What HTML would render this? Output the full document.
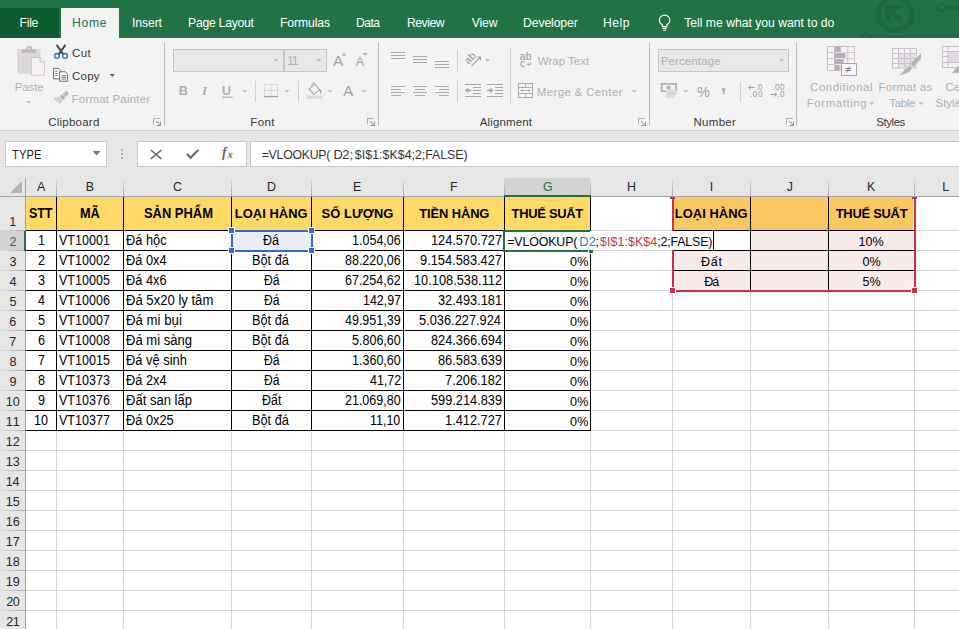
<!DOCTYPE html>
<html lang="vi"><head><meta charset="utf-8"><title>Excel VLOOKUP</title>
<style>
html,body{margin:0;padding:0}
body{width:959px;height:629px;overflow:hidden;position:relative;background:#fff;font-family:"Liberation Sans", sans-serif;}
body div, body span.t, body svg{position:absolute;box-sizing:border-box}
span.t{white-space:pre;display:block}
</style></head><body>
<div style="left:0px;top:0px;width:959px;height:38px;background:#217346;"></div>
<svg style="left:760px;top:0;width:199px;height:38px" viewBox="760 0 199 38" fill="none" stroke="#1e6840">
<circle cx="894.9" cy="13.8" r="16.7" stroke-width="5.2"/>
<path d="M887.6 21 V7.2 H902 M888.5 8 L901.4 20.6" stroke-width="4.8"/>
<circle cx="941.2" cy="7.5" r="3.8" stroke-width="2.6"/><path d="M945 7.7 H959" stroke-width="4.2"/>
<path d="M869 36.4 H959" stroke-width="2"/><circle cx="865.5" cy="37.3" r="3.4" stroke-width="2.2"/>
</svg>
<div style="left:0px;top:8px;width:59px;height:30px;background:#0e5c2f;"></div>
<div style="left:61px;top:8px;width:58px;height:30px;background:#f3f3f3;"></div>
<span class="t" style="left:19.50px;top:17.00px;font-size:12.2px;line-height:12.2px;color:#fff;letter-spacing:-0.250px;">File</span>
<span class="t" style="left:72.00px;top:17.00px;font-size:12.2px;line-height:12.2px;color:#217346;letter-spacing:0.667px;">Home</span>
<span class="t" style="left:132.00px;top:17.00px;font-size:12.2px;line-height:12.2px;color:#fff;letter-spacing:-0.100px;">Insert</span>
<span class="t" style="left:188.00px;top:17.00px;font-size:12.2px;line-height:12.2px;color:#fff;letter-spacing:-0.250px;">Page Layout</span>
<span class="t" style="left:280.00px;top:17.00px;font-size:12.2px;line-height:12.2px;color:#fff;letter-spacing:-0.107px;">Formulas</span>
<span class="t" style="left:356.00px;top:17.00px;font-size:12.2px;line-height:12.2px;color:#fff;letter-spacing:-0.583px;">Data</span>
<span class="t" style="left:407.00px;top:17.00px;font-size:12.2px;line-height:12.2px;color:#fff;letter-spacing:-0.500px;">Review</span>
<span class="t" style="left:471.75px;top:17.00px;font-size:12.2px;line-height:12.2px;color:#fff;letter-spacing:-0.167px;">View</span>
<span class="t" style="left:523.00px;top:17.00px;font-size:12.2px;line-height:12.2px;color:#fff;letter-spacing:-0.094px;">Developer</span>
<span class="t" style="left:603.00px;top:17.00px;font-size:12.2px;line-height:12.2px;color:#fff;letter-spacing:0.500px;">Help</span>
<span class="t" style="left:684.25px;top:17.00px;font-size:12.2px;line-height:12.2px;color:#fff;letter-spacing:-0.010px;">Tell me what you want to do</span>
<svg style="left:656px;top:12px;width:18px;height:22px" viewBox="656 12 18 22" fill="none" stroke="#fff" stroke-width="1.15">
<path d="M662.4 26.6 V25 C660.6 23.6 659.3 22.3 659.3 20.4 A5.3 5.3 0 0 1 669.9 20.4 C669.9 22.3 668.6 23.6 666.8 25 V26.6 Z"/>
<path d="M662.4 28.4 H666.8 M663 30.2 H666.2"/>
</svg>
<div style="left:0px;top:38px;width:959px;height:92px;background:#f3f3f3;"></div>
<div style="left:0px;top:130px;width:959px;height:1px;background:#d4d4d4;"></div>
<div style="left:164px;top:42px;width:1px;height:84px;background:#bdbdbd;"></div>
<div style="left:378px;top:42px;width:1px;height:84px;background:#bdbdbd;"></div>
<div style="left:649px;top:42px;width:1px;height:84px;background:#bdbdbd;"></div>
<div style="left:796px;top:42px;width:1px;height:84px;background:#bdbdbd;"></div>
<svg style="left:0;top:38px;width:959px;height:92px" viewBox="0 38 959 92"><rect x="17" y="49" width="23.7" height="24.8" rx="1.5" fill="#dbd7db"/><rect x="22" y="49.3" width="13.8" height="3.4" fill="#b9b5b9"/><path d="M26.4 49.4 V47.3 Q26.4 46.3 27.4 46.3 H30.8 Q31.8 46.3 31.8 47.3 V49.4 Z" fill="#b9b5b9"/><circle cx="29.1" cy="48.2" r="0.9" fill="#f3f3f3"/><path d="M31.3 57.5 H40 L44.4 62 V75.3 H31.3 Z" fill="#f6f2f6" stroke="#c6c2c6" stroke-width="0.9"/><path d="M40 57.5 V62 H44.4" fill="none" stroke="#c6c2c6" stroke-width="0.9"/><path d="M26.0 101.1 H31.2 L28.6 103.9 Z" fill="#c0c0c0"/><path d="M56.6 44.8 L63.3 54.3 M65.4 44.8 L58.7 54.3" stroke="#4a4a4a" stroke-width="2" fill="none"/><circle cx="57" cy="55.9" r="2.4" fill="none" stroke="#2e75b6" stroke-width="1.3"/><circle cx="65" cy="55.9" r="2.4" fill="none" stroke="#2e75b6" stroke-width="1.3"/><path d="M59.5 78.8 H53.6 V68.4 H58.5 L60.6 70.5 V71.5" fill="#fff" stroke="#5a5a5a" stroke-width="0.9"/><path d="M59.6 71.8 H65.2 L67.6 74.2 V81.2 H59.6 Z" fill="#fff" stroke="#5a5a5a" stroke-width="0.9"/><path d="M55.1 71.2 H57.7 M55.1 73.4 H57.7 M55.1 75.6 H57.7 M61.5 75.7 H65.9 M61.5 77.4 H65.9 M61.5 79.1 H65.9" stroke="#2e75b6" stroke-width="0.9"/><path d="M109.7 74.1 H114.9 L112.3 76.9 Z" fill="#606060"/><path d="M66.3 90.8 L69.3 93.4 L65.2 97.2 L62.4 94.3 Z" fill="#bdb9bd"/><path d="M61.6 94.4 L65.1 98.1 L63.5 99.7 L60 96.1 Z" fill="#a9a5a9"/><path d="M59.4 96.3 L63.2 100.2 L59.8 104.3 L53.6 98.6 Z" fill="#d2ced2"/><path d="M153.5 124.5 V118.5 H160" fill="none" stroke="#adadad" stroke-width="1"/><path d="M156.2 121.2 L160 125 M156.5 125.5 H160.5 V121.5" fill="none" stroke="#9a9a9a" stroke-width="1.05"/><rect x="173.5" y="49.5" width="110" height="22" fill="#e8e8e8" stroke="#c6c6c6"/><rect x="284.5" y="49.5" width="42" height="22" fill="#e8e8e8" stroke="#c6c6c6"/><path d="M273.4 58.9 H278.6 L276.0 61.7 Z" fill="#c0c0c0"/><path d="M316.4 58.9 H321.6 L319.0 61.7 Z" fill="#c0c0c0"/><path d="M341.5 55.5 L344 52.8 L346.5 55.5 Z" fill="#b0b0b0"/><path d="M362.5 53 H367.5 L365 55.8 Z" fill="#b0b0b0"/><path d="M222 97.2 H232.6" stroke="#a9a9a9" stroke-width="1.2"/><path d="M241.9 89.9 H247.1 L244.5 92.7 Z" fill="#c0c0c0"/><path d="M264.5 84.5 H277.5 M264.5 90.5 H277.5 M264.5 84.5 V96 M271 84.5 V96 M277.5 84.5 V96" stroke="#c9b9cc" stroke-width="1" stroke-dasharray="1 1" fill="none"/><path d="M263.8 96.6 H278" stroke="#a0a0a0" stroke-width="1.3"/><path d="M284.4 89.9 H289.6 L287.0 92.7 Z" fill="#c0c0c0"/><path d="M309.3 89.2 L314.6 84.2 L319.6 89.6 L313.9 94.3 Z" fill="#f3f3f3" stroke="#a4a4a4" stroke-width="1.1"/><path d="M312 86.5 V83.5 Q313.5 82 315 83.5 V85" fill="none" stroke="#a4a4a4" stroke-width="1"/><path d="M319.5 88.5 Q322.3 91 321.3 94.3 Q319.4 92.5 319.5 88.5 Z" fill="#a4a4a4"/><rect x="306" y="95.5" width="16" height="3.4" fill="#e2d8e2"/><path d="M327.4 89.9 H332.6 L330.0 92.7 Z" fill="#c0c0c0"/><path d="M361.4 89.9 H366.6 L364.0 92.7 Z" fill="#c0c0c0"/><path d="M367.5 124.5 V118.5 H374" fill="none" stroke="#adadad" stroke-width="1"/><path d="M370.2 121.2 L374 125 M370.5 125.5 H374.5 V121.5" fill="none" stroke="#9a9a9a" stroke-width="1.05"/><path d="M391.0 52.5 h14.0 M391.0 55.5 h14.0 M391.0 58.5 h14.0" stroke="#a8a8a8" stroke-width="1" fill="none"/><path d="M413.0 56.5 h14.0 M413.0 59.5 h14.0 M413.0 62.5 h14.0" stroke="#a8a8a8" stroke-width="1" fill="none"/><path d="M435.0 61.5 h14.0 M435.0 64.5 h14.0 M435.0 67.5 h14.0" stroke="#a8a8a8" stroke-width="1" fill="none"/><path d="M471.4 66.2 L480 57.6 M477.4 57.2 H480.4 V60.2" fill="none" stroke="#a4a4a4" stroke-width="1.2"/><path d="M484.9 58.9 H490.1 L487.5 61.7 Z" fill="#c0c0c0"/><path d="M530.8 62.2 V64.4 H527.2 M528.8 62.8 L527.2 64.4 L528.8 66" fill="none" stroke="#a8a8a8" stroke-width="1"/><path d="M391.0 86.5 h14.0 M391.0 89.5 h10.0 M391.0 92.5 h14.0 M391.0 95.5 h10.0" stroke="#a8a8a8" stroke-width="1" fill="none"/><path d="M413.0 86.5 h14.0 M415.0 89.5 h10.0 M413.0 92.5 h14.0 M415.0 95.5 h10.0" stroke="#a8a8a8" stroke-width="1" fill="none"/><path d="M435.0 86.5 h14.0 M439.0 89.5 h10.0 M435.0 92.5 h14.0 M439.0 95.5 h10.0" stroke="#a8a8a8" stroke-width="1" fill="none"/><path d="M465.0 84.5 h16.0 M473.0 87.5 h8.0 M473.0 90.5 h8.0 M473.0 93.5 h8.0 M465.0 96.5 h16.0" stroke="#a8a8a8" stroke-width="1" fill="none"/><path d="M471.4 90.5 H467" fill="none" stroke="#a6a6a6" stroke-width="1.6"/><path d="M465 90.5 L468.4 87.6 V93.4 Z" fill="#a6a6a6"/><path d="M487.0 84.5 h16.0 M495.0 87.5 h8.0 M495.0 90.5 h8.0 M495.0 93.5 h8.0 M487.0 96.5 h16.0" stroke="#a8a8a8" stroke-width="1" fill="none"/><path d="M487.2 90.5 H491.6" fill="none" stroke="#a6a6a6" stroke-width="1.6"/><path d="M493.6 90.5 L490.2 87.6 V93.4 Z" fill="#a6a6a6"/><rect x="518.5" y="83.5" width="14" height="14" fill="#f8f4f8" stroke="#b0a8b0"/><path d="M518.5 87.5 H532.5 M518.5 93.5 H532.5 M525.5 83.5 V87.5 M525.5 93.5 V97.5" stroke="#b0a8b0" fill="none"/><path d="M521 90.5 H530 M522.5 89 L521 90.5 L522.5 92 M528.5 89 L530 90.5 L528.5 92" stroke="#b0a8b0" fill="none" stroke-width="0.9"/><path d="M631.7 89.9 H636.9 L634.3 92.7 Z" fill="#c0c0c0"/><path d="M638.5 124.5 V118.5 H645" fill="none" stroke="#adadad" stroke-width="1"/><path d="M641.2 121.2 L645 125 M641.5 125.5 H645.5 V121.5" fill="none" stroke="#9a9a9a" stroke-width="1.05"/><rect x="658.5" y="49.5" width="130" height="22" fill="#e8e8e8" stroke="#c6c6c6"/><path d="M778.9 58.9 H784.1 L781.5 61.7 Z" fill="#c0c0c0"/><rect x="661.6" y="83.9" width="14.6" height="7.4" fill="#f3f3f3" stroke="#a6a6a6" stroke-width="1.5"/><circle cx="668.6" cy="87.6" r="2" fill="#b0b0b0"/><ellipse cx="671.2" cy="91" rx="5.6" ry="1.9" fill="#e4dce4"/><ellipse cx="671.2" cy="93.6" rx="5.6" ry="1.9" fill="#d9d1d9"/><ellipse cx="670" cy="96.4" rx="5" ry="1.9" fill="#e4dce4"/><path d="M683.1 89.9 H688.3 L685.7 92.7 Z" fill="#c0c0c0"/><path d="M754.6 87.5 H748.6 M750.8 85.3 L748.6 87.5 L750.8 89.7" fill="none" stroke="#a0a0a0" stroke-width="1"/><path d="M770.4 94.5 H776.6 M774.4 92.3 L776.6 94.5 L774.4 96.7" fill="none" stroke="#a0a0a0" stroke-width="1"/><path d="M786.5 124.5 V118.5 H793" fill="none" stroke="#adadad" stroke-width="1"/><path d="M789.2 121.2 L793 125 M789.5 125.5 H793.5 V121.5" fill="none" stroke="#9a9a9a" stroke-width="1.05"/><rect x="827.5" y="46.5" width="27" height="24" fill="#f8f2f8" stroke="#c9c1c9"/><path d="M827.5 52.5 H854.5 M827.5 58.5 H854.5 M827.5 64.5 H854.5 M834.5 46.5 V70.5 M840.8 46.5 V70.5 M847.8 46.5 V70.5" stroke="#c9c1c9" fill="none"/><path d="M834.6 46.6 h6 v6 h-6z M834.6 52.6 h11 v6 h-11z M834.6 58.6 h9 v6 h-9z M834.6 64.6 h5 v5.8 h-5z" fill="#b3afb3"/><path d="M834.6 52.5 H846 M834.6 58.5 H846 M834.6 64.5 H844" stroke="#ece6ec" fill="none"/><rect x="841.5" y="63.5" width="15" height="12" fill="#f8f2f8" stroke="#a9a5a9"/><path d="M869.4 102.3 H874.0 L871.7 104.9 Z" fill="#b8b8b8"/><rect x="892.5" y="48.5" width="24" height="19.5" fill="#f8f2f8" stroke="#c9c1c9"/><rect x="899" y="53.5" width="17.5" height="14.5" fill="#e3dfe3"/><path d="M892.5 53.5 H916.5 M892.5 58.5 H916.5 M892.5 63.5 H916.5 M898.5 48.5 V68 M904.5 48.5 V68 M910.5 48.5 V68" stroke="#c9c1c9" fill="none"/><path d="M921 53.6 V58.8 L913.6 67 L910.4 63.8 Z" fill="#b7b3b7"/><path d="M909.6 64.8 L912.6 67.8 Q910 75 898.6 75.4 Q904.5 71 904.8 67.6 Q906.5 64.6 909.6 64.8 Z" fill="#b7b3b7" stroke="#f3f3f3" stroke-width="0.8"/><path d="M905.6 69 Q906.8 66.6 909 66.4" stroke="#f3f3f3" stroke-width="1" fill="none"/><path d="M918.7 102.3 H923.3 L921.0 104.9 Z" fill="#b8b8b8"/><rect x="942.5" y="46.5" width="24" height="21" fill="#f8f2f8" stroke="#c9c1c9"/><rect x="948" y="51.5" width="18" height="11" fill="#e0dce0"/><path d="M942.5 51.5 H966 M942.5 56.5 H948 M942.5 62.5 H966 M948 46.5 V67.5" stroke="#c9c1c9" fill="none"/><path d="M949 73.4 Q953.5 72.5 955 68.5 Q956.5 66 959.5 65.6 V73.4 Z" fill="#b7b3b7" stroke="#f3f3f3" stroke-width="0.8"/></svg>
<span class="t" style="left:14.70px;top:82.00px;font-size:11.5px;line-height:11.5px;color:#b0b0b0;letter-spacing:-0.100px;">Paste</span>
<span class="t" style="left:72.00px;top:48.00px;font-size:11.5px;line-height:11.5px;color:#383838;letter-spacing:0.425px;">Cut</span>
<span class="t" style="left:72.00px;top:71.00px;font-size:11.5px;line-height:11.5px;color:#383838;letter-spacing:0.217px;">Copy</span>
<span class="t" style="left:71.60px;top:94.00px;font-size:11.5px;line-height:11.5px;color:#b0b0b0;letter-spacing:0.185px;">Format Painter</span>
<span class="t" style="left:48.20px;top:117.00px;font-size:11.5px;line-height:11.5px;color:#383838;letter-spacing:0.237px;">Clipboard</span>
<span class="t" style="left:287.00px;top:55.00px;font-size:12.2px;line-height:12.2px;color:#b4b4b4;letter-spacing:-1.000px;">11</span>
<span class="t" style="left:333.00px;top:53.00px;font-size:15.5px;line-height:15.5px;color:#a2a2a2;letter-spacing:0.250px;">A</span>
<span class="t" style="left:355.80px;top:56.00px;font-size:12.5px;line-height:12.5px;color:#a2a2a2;letter-spacing:-0.050px;">A</span>
<span class="t" style="left:178.75px;top:85.00px;font-size:12.6px;line-height:12.6px;color:#b0b0b0;font-weight:700;letter-spacing:-0.250px;">B</span>
<span class="t" style="left:201.90px;top:84.00px;font-size:13px;line-height:13px;color:#b0b0b0;font-weight:700;font-style:italic;font-family:'Liberation Serif',serif;">I</span>
<span class="t" style="left:222.05px;top:85.00px;font-size:12.4px;line-height:12.4px;color:#b0b0b0;font-weight:700;letter-spacing:1.500px;">U</span>
<div style="left:255px;top:81px;width:1px;height:21px;background:#d0d0d0;"></div>
<div style="left:298px;top:81px;width:1px;height:21px;background:#d0d0d0;"></div>
<span class="t" style="left:343.30px;top:83.00px;font-size:15px;line-height:15px;color:#a0a0a0;letter-spacing:-0.500px;">A</span>
<span class="t" style="left:250.20px;top:117.00px;font-size:11.5px;line-height:11.5px;color:#383838;letter-spacing:0.433px;">Font</span>
<div style="left:457px;top:50px;width:1px;height:21px;background:#d0d0d0;"></div>
<span class="t" style="left:469.50px;top:56.00px;font-size:10.4px;line-height:10.4px;color:#929292;transform:rotate(-45deg);transform-origin:0 100%;">ab</span>
<div style="left:510px;top:48px;width:1px;height:55px;background:#d0d0d0;"></div>
<span class="t" style="left:519.70px;top:52.00px;font-size:10.2px;line-height:10.2px;color:#969696;letter-spacing:0.500px;">ab</span>
<span class="t" style="left:520.10px;top:59.00px;font-size:10.2px;line-height:10.2px;color:#969696;">c</span>
<span class="t" style="left:537.80px;top:56.00px;font-size:11.5px;line-height:11.5px;color:#b0b0b0;letter-spacing:-0.006px;">Wrap Text</span>
<div style="left:457px;top:81px;width:1px;height:21px;background:#d0d0d0;"></div>
<span class="t" style="left:536.80px;top:87.00px;font-size:11.5px;line-height:11.5px;color:#b0b0b0;letter-spacing:0.346px;">Merge &amp; Center</span>
<span class="t" style="left:479.70px;top:117.00px;font-size:11.5px;line-height:11.5px;color:#383838;letter-spacing:0.137px;">Alignment</span>
<span class="t" style="left:660.80px;top:56.00px;font-size:11.5px;line-height:11.5px;color:#b0b0b0;letter-spacing:0.106px;">Percentage</span>
<span class="t" style="left:697.00px;top:85.00px;font-size:14.5px;line-height:14.5px;color:#a0a0a0;letter-spacing:0.500px;">%</span>
<span class="t" style="left:720.40px;top:73.00px;font-size:21px;line-height:21px;color:#b0b0b0;font-weight:700;">,</span>
<div style="left:740px;top:82px;width:1px;height:20px;background:#d0d0d0;"></div>
<span class="t" style="left:756.45px;top:84.00px;font-size:8.2px;line-height:8.2px;color:#9c9c9c;letter-spacing:-0.650px;">.0</span>
<span class="t" style="left:749.85px;top:91.00px;font-size:8.2px;line-height:8.2px;color:#9c9c9c;letter-spacing:0.725px;">.00</span>
<span class="t" style="left:772.25px;top:84.00px;font-size:8.2px;line-height:8.2px;color:#9c9c9c;letter-spacing:0.475px;">.00</span>
<span class="t" style="left:777.35px;top:91.00px;font-size:8.2px;line-height:8.2px;color:#9c9c9c;letter-spacing:0.350px;">.0</span>
<span class="t" style="left:693.50px;top:117.00px;font-size:11.5px;line-height:11.5px;color:#383838;letter-spacing:0.290px;">Number</span>
<span class="t" style="left:845.55px;top:64.00px;font-size:10.5px;line-height:10.5px;color:#666;">≠</span>
<span class="t" style="left:810.10px;top:82.00px;font-size:11.5px;line-height:11.5px;color:#b0b0b0;letter-spacing:0.495px;">Conditional</span>
<span class="t" style="left:806.80px;top:98.00px;font-size:11.5px;line-height:11.5px;color:#b0b0b0;letter-spacing:0.550px;">Formatting</span>
<span class="t" style="left:878.50px;top:82.00px;font-size:11.5px;line-height:11.5px;color:#b0b0b0;letter-spacing:0.244px;">Format as</span>
<span class="t" style="left:889.25px;top:98.00px;font-size:11.5px;line-height:11.5px;color:#b0b0b0;letter-spacing:-0.312px;">Table</span>
<span class="t" style="left:945.50px;top:82.00px;font-size:11.5px;line-height:11.5px;color:#b0b0b0;">Cell</span>
<span class="t" style="left:935.50px;top:98.00px;font-size:11.5px;line-height:11.5px;color:#b0b0b0;">Styles</span>
<span class="t" style="left:876.30px;top:117.00px;font-size:11.5px;line-height:11.5px;color:#383838;letter-spacing:-0.460px;">Styles</span>
<div style="left:0px;top:131px;width:959px;height:47px;background:#e6e6e6;"></div>
<div style="left:5px;top:141px;width:102px;height:26px;background:#fff;border:1px solid #c8c8c8;"></div>
<span class="t" style="left:11.98px;top:149.00px;font-size:12.6px;line-height:12.6px;color:#222;transform:scaleX(0.8937);transform-origin:0 0;">TYPE</span>
<svg style="left:92px;top:151px;width:9px;height:5px" viewBox="0 0 9 5"><path d="M0.5 0 H8.5 L4.5 4.5 Z" fill="#777"/></svg>
<div style="left:121px;top:149px;width:2px;height:2px;background:#b5b5b5;"></div>
<div style="left:121px;top:153px;width:2px;height:2px;background:#b5b5b5;"></div>
<div style="left:121px;top:157px;width:2px;height:2px;background:#b5b5b5;"></div>
<div style="left:137px;top:141px;width:110px;height:26px;background:#fff;border:1px solid #c8c8c8;"></div>
<div style="left:250px;top:141px;width:720px;height:26px;background:#fff;border:1px solid #c8c8c8;"></div>
<svg style="left:148px;top:147px;width:16px;height:14px" viewBox="148 147 16 14" fill="none" stroke="#666" stroke-width="1.6"><path d="M150.8 150 L161.4 158.8 M161.4 150 L150.8 158.8"/></svg>
<svg style="left:184px;top:147px;width:17px;height:14px" viewBox="184 147 17 14"><path d="M186 154.6 L187.8 153.2 L190.6 156.2 L197.6 149.2 L199 150.4 L190.6 159.4 Z" fill="#6a6a6a"/></svg>
<span class="t" style="left:222.00px;top:146.00px;font-size:13.6px;line-height:13.6px;color:#666;font-weight:700;font-style:italic;font-family:'Liberation Serif',serif;">f</span>
<span class="t" style="left:227.80px;top:150.00px;font-size:10px;line-height:10px;color:#666;font-weight:700;font-style:italic;font-family:'Liberation Serif',serif;">x</span>
<span class="t" style="left:261.70px;top:149.00px;font-size:12.3px;line-height:12.3px;color:#333;letter-spacing:-0.250px;">=VLOOKUP(</span>
<span class="t" style="left:333.60px;top:149.00px;font-size:12.8px;line-height:12.8px;color:#333;letter-spacing:-0.550px;">D2</span>
<span class="t" style="left:349.75px;top:149.00px;font-size:12.3px;line-height:12.3px;color:#333;">;</span>
<span class="t" style="left:354.75px;top:149.00px;font-size:12.3px;line-height:12.3px;color:#333;letter-spacing:0.100px;">$I$1:$K$4</span>
<span class="t" style="left:411.55px;top:149.00px;font-size:12.3px;line-height:12.3px;color:#333;">;2;FALSE)</span>
<div style="left:0px;top:178px;width:959px;height:451px;background:#fff;"></div>
<div style="left:0px;top:178px;width:959px;height:18px;background:#e6e6e6;"></div>
<div style="left:0px;top:178px;width:25px;height:451px;background:#e6e6e6;"></div>
<div style="left:56px;top:197px;width:1px;height:432px;background:#d4d4d4;"></div>
<div style="left:123px;top:197px;width:1px;height:432px;background:#d4d4d4;"></div>
<div style="left:231px;top:197px;width:1px;height:432px;background:#d4d4d4;"></div>
<div style="left:311px;top:197px;width:1px;height:432px;background:#d4d4d4;"></div>
<div style="left:403px;top:197px;width:1px;height:432px;background:#d4d4d4;"></div>
<div style="left:504px;top:197px;width:1px;height:432px;background:#d4d4d4;"></div>
<div style="left:590px;top:197px;width:1px;height:432px;background:#d4d4d4;"></div>
<div style="left:672px;top:197px;width:1px;height:432px;background:#d4d4d4;"></div>
<div style="left:750px;top:197px;width:1px;height:432px;background:#d4d4d4;"></div>
<div style="left:828px;top:197px;width:1px;height:432px;background:#d4d4d4;"></div>
<div style="left:914px;top:197px;width:1px;height:432px;background:#d4d4d4;"></div>
<div style="left:977px;top:197px;width:1px;height:432px;background:#d4d4d4;"></div>
<div style="left:26px;top:230px;width:933px;height:1px;background:#d4d4d4;"></div>
<div style="left:26px;top:250px;width:933px;height:1px;background:#d4d4d4;"></div>
<div style="left:26px;top:270px;width:933px;height:1px;background:#d4d4d4;"></div>
<div style="left:26px;top:290px;width:933px;height:1px;background:#d4d4d4;"></div>
<div style="left:26px;top:310px;width:933px;height:1px;background:#d4d4d4;"></div>
<div style="left:26px;top:330px;width:933px;height:1px;background:#d4d4d4;"></div>
<div style="left:26px;top:350px;width:933px;height:1px;background:#d4d4d4;"></div>
<div style="left:26px;top:370px;width:933px;height:1px;background:#d4d4d4;"></div>
<div style="left:26px;top:390px;width:933px;height:1px;background:#d4d4d4;"></div>
<div style="left:26px;top:410px;width:933px;height:1px;background:#d4d4d4;"></div>
<div style="left:26px;top:430px;width:933px;height:1px;background:#d4d4d4;"></div>
<div style="left:26px;top:450px;width:933px;height:1px;background:#d4d4d4;"></div>
<div style="left:26px;top:470px;width:933px;height:1px;background:#d4d4d4;"></div>
<div style="left:26px;top:490px;width:933px;height:1px;background:#d4d4d4;"></div>
<div style="left:26px;top:510px;width:933px;height:1px;background:#d4d4d4;"></div>
<div style="left:26px;top:530px;width:933px;height:1px;background:#d4d4d4;"></div>
<div style="left:26px;top:550px;width:933px;height:1px;background:#d4d4d4;"></div>
<div style="left:26px;top:570px;width:933px;height:1px;background:#d4d4d4;"></div>
<div style="left:26px;top:590px;width:933px;height:1px;background:#d4d4d4;"></div>
<div style="left:26px;top:610px;width:933px;height:1px;background:#d4d4d4;"></div>
<div style="left:26px;top:630px;width:933px;height:1px;background:#d4d4d4;"></div>
<div style="left:0px;top:196px;width:959px;height:1px;background:#a3a3a3;"></div>
<div style="left:25px;top:178px;width:1px;height:451px;background:#a3a3a3;"></div>
<div style="left:56px;top:178px;width:1px;height:18px;background:linear-gradient(to bottom,#e0e0e0,#a6a6a6);"></div>
<div style="left:123px;top:178px;width:1px;height:18px;background:linear-gradient(to bottom,#e0e0e0,#a6a6a6);"></div>
<div style="left:231px;top:178px;width:1px;height:18px;background:linear-gradient(to bottom,#e0e0e0,#a6a6a6);"></div>
<div style="left:311px;top:178px;width:1px;height:18px;background:linear-gradient(to bottom,#e0e0e0,#a6a6a6);"></div>
<div style="left:403px;top:178px;width:1px;height:18px;background:linear-gradient(to bottom,#e0e0e0,#a6a6a6);"></div>
<div style="left:504px;top:178px;width:1px;height:18px;background:linear-gradient(to bottom,#e0e0e0,#a6a6a6);"></div>
<div style="left:590px;top:178px;width:1px;height:18px;background:linear-gradient(to bottom,#e0e0e0,#a6a6a6);"></div>
<div style="left:672px;top:178px;width:1px;height:18px;background:linear-gradient(to bottom,#e0e0e0,#a6a6a6);"></div>
<div style="left:750px;top:178px;width:1px;height:18px;background:linear-gradient(to bottom,#e0e0e0,#a6a6a6);"></div>
<div style="left:828px;top:178px;width:1px;height:18px;background:linear-gradient(to bottom,#e0e0e0,#a6a6a6);"></div>
<div style="left:914px;top:178px;width:1px;height:18px;background:linear-gradient(to bottom,#e0e0e0,#a6a6a6);"></div>
<div style="left:977px;top:178px;width:1px;height:18px;background:linear-gradient(to bottom,#e0e0e0,#a6a6a6);"></div>
<div style="left:0px;top:230px;width:25px;height:1px;background:linear-gradient(to right,#dedede,#ababab);"></div>
<div style="left:0px;top:250px;width:25px;height:1px;background:linear-gradient(to right,#dedede,#ababab);"></div>
<div style="left:0px;top:270px;width:25px;height:1px;background:linear-gradient(to right,#dedede,#ababab);"></div>
<div style="left:0px;top:290px;width:25px;height:1px;background:linear-gradient(to right,#dedede,#ababab);"></div>
<div style="left:0px;top:310px;width:25px;height:1px;background:linear-gradient(to right,#dedede,#ababab);"></div>
<div style="left:0px;top:330px;width:25px;height:1px;background:linear-gradient(to right,#dedede,#ababab);"></div>
<div style="left:0px;top:350px;width:25px;height:1px;background:linear-gradient(to right,#dedede,#ababab);"></div>
<div style="left:0px;top:370px;width:25px;height:1px;background:linear-gradient(to right,#dedede,#ababab);"></div>
<div style="left:0px;top:390px;width:25px;height:1px;background:linear-gradient(to right,#dedede,#ababab);"></div>
<div style="left:0px;top:410px;width:25px;height:1px;background:linear-gradient(to right,#dedede,#ababab);"></div>
<div style="left:0px;top:430px;width:25px;height:1px;background:linear-gradient(to right,#dedede,#ababab);"></div>
<div style="left:0px;top:450px;width:25px;height:1px;background:linear-gradient(to right,#dedede,#ababab);"></div>
<div style="left:0px;top:470px;width:25px;height:1px;background:linear-gradient(to right,#dedede,#ababab);"></div>
<div style="left:0px;top:490px;width:25px;height:1px;background:linear-gradient(to right,#dedede,#ababab);"></div>
<div style="left:0px;top:510px;width:25px;height:1px;background:linear-gradient(to right,#dedede,#ababab);"></div>
<div style="left:0px;top:530px;width:25px;height:1px;background:linear-gradient(to right,#dedede,#ababab);"></div>
<div style="left:0px;top:550px;width:25px;height:1px;background:linear-gradient(to right,#dedede,#ababab);"></div>
<div style="left:0px;top:570px;width:25px;height:1px;background:linear-gradient(to right,#dedede,#ababab);"></div>
<div style="left:0px;top:590px;width:25px;height:1px;background:linear-gradient(to right,#dedede,#ababab);"></div>
<div style="left:0px;top:610px;width:25px;height:1px;background:linear-gradient(to right,#dedede,#ababab);"></div>
<div style="left:0px;top:630px;width:25px;height:1px;background:linear-gradient(to right,#dedede,#ababab);"></div>
<div style="left:505px;top:178px;width:85px;height:18px;background:#d2d2d2;"></div>
<div style="left:504px;top:195px;width:87px;height:2px;background:#217346;"></div>
<div style="left:0px;top:231px;width:25px;height:19px;background:#d2d2d2;"></div>
<div style="left:24px;top:231px;width:2px;height:20px;background:#217346;"></div>
<svg style="left:10px;top:181px;width:12px;height:12px" viewBox="0 0 12 12"><path d="M12 0 V12 H0 Z" fill="#b4b4b4"/></svg>
<span class="t" style="left:36.88px;top:181.00px;font-size:12.4px;line-height:12.4px;color:#262626;">A</span>
<span class="t" style="left:85.75px;top:181.00px;font-size:12.4px;line-height:12.4px;color:#262626;">B</span>
<span class="t" style="left:173.00px;top:181.00px;font-size:12.4px;line-height:12.4px;color:#262626;">C</span>
<span class="t" style="left:266.88px;top:181.00px;font-size:12.4px;line-height:12.4px;color:#262626;">D</span>
<span class="t" style="left:353.12px;top:181.00px;font-size:12.4px;line-height:12.4px;color:#262626;">E</span>
<span class="t" style="left:450.00px;top:181.00px;font-size:12.4px;line-height:12.4px;color:#262626;">F</span>
<span class="t" style="left:542.88px;top:181.00px;font-size:12.4px;line-height:12.4px;color:#217346;">G</span>
<span class="t" style="left:627.00px;top:181.00px;font-size:12.4px;line-height:12.4px;color:#262626;">H</span>
<span class="t" style="left:709.75px;top:181.00px;font-size:12.4px;line-height:12.4px;color:#262626;">I</span>
<span class="t" style="left:786.75px;top:181.00px;font-size:12.4px;line-height:12.4px;color:#262626;">J</span>
<span class="t" style="left:867.00px;top:181.00px;font-size:12.4px;line-height:12.4px;color:#262626;">K</span>
<span class="t" style="left:942.25px;top:181.00px;font-size:12.4px;line-height:12.4px;color:#262626;">L</span>
<span class="t" style="left:9.15px;top:216.00px;font-size:12.6px;line-height:12.6px;color:#262626;">1</span>
<span class="t" style="left:9.40px;top:236.00px;font-size:12.6px;line-height:12.6px;color:#217346;">2</span>
<span class="t" style="left:9.40px;top:256.00px;font-size:12.6px;line-height:12.6px;color:#262626;">3</span>
<span class="t" style="left:9.40px;top:276.00px;font-size:12.6px;line-height:12.6px;color:#262626;">4</span>
<span class="t" style="left:9.40px;top:296.00px;font-size:12.6px;line-height:12.6px;color:#262626;">5</span>
<span class="t" style="left:9.28px;top:316.00px;font-size:12.6px;line-height:12.6px;color:#262626;">6</span>
<span class="t" style="left:9.28px;top:336.00px;font-size:12.6px;line-height:12.6px;color:#262626;">7</span>
<span class="t" style="left:9.40px;top:356.00px;font-size:12.6px;line-height:12.6px;color:#262626;">8</span>
<span class="t" style="left:9.40px;top:376.00px;font-size:12.6px;line-height:12.6px;color:#262626;">9</span>
<span class="t" style="left:5.70px;top:396.00px;font-size:12.6px;line-height:12.6px;color:#262626;letter-spacing:0.100px;">10</span>
<span class="t" style="left:5.70px;top:416.00px;font-size:12.6px;line-height:12.6px;color:#262626;letter-spacing:1.100px;">11</span>
<span class="t" style="left:5.70px;top:436.00px;font-size:12.6px;line-height:12.6px;color:#262626;letter-spacing:0.100px;">12</span>
<span class="t" style="left:5.70px;top:456.00px;font-size:12.6px;line-height:12.6px;color:#262626;letter-spacing:0.100px;">13</span>
<span class="t" style="left:5.70px;top:476.00px;font-size:12.6px;line-height:12.6px;color:#262626;letter-spacing:-0.150px;">14</span>
<span class="t" style="left:5.70px;top:496.00px;font-size:12.6px;line-height:12.6px;color:#262626;letter-spacing:0.100px;">15</span>
<span class="t" style="left:5.70px;top:516.00px;font-size:12.6px;line-height:12.6px;color:#262626;letter-spacing:0.100px;">16</span>
<span class="t" style="left:5.70px;top:536.00px;font-size:12.6px;line-height:12.6px;color:#262626;letter-spacing:0.100px;">17</span>
<span class="t" style="left:5.70px;top:556.00px;font-size:12.6px;line-height:12.6px;color:#262626;letter-spacing:0.100px;">18</span>
<span class="t" style="left:5.70px;top:576.00px;font-size:12.6px;line-height:12.6px;color:#262626;letter-spacing:0.100px;">19</span>
<span class="t" style="left:6.20px;top:596.00px;font-size:12.6px;line-height:12.6px;color:#262626;letter-spacing:-0.400px;">20</span>
<span class="t" style="left:6.20px;top:616.00px;font-size:12.6px;line-height:12.6px;color:#262626;letter-spacing:-0.400px;">21</span>
<div style="left:26px;top:197px;width:564px;height:33px;background:#ffd966;"></div>
<div style="left:673px;top:197px;width:240px;height:33px;background:#f8c762;"></div>
<div style="left:673px;top:231px;width:240px;height:59px;background:#faebeb;"></div>
<div style="left:56px;top:197px;width:1px;height:234px;background:#000;"></div>
<div style="left:123px;top:197px;width:1px;height:234px;background:#000;"></div>
<div style="left:231px;top:197px;width:1px;height:234px;background:#000;"></div>
<div style="left:311px;top:197px;width:1px;height:234px;background:#000;"></div>
<div style="left:403px;top:197px;width:1px;height:234px;background:#000;"></div>
<div style="left:504px;top:197px;width:1px;height:234px;background:#000;"></div>
<div style="left:590px;top:197px;width:1px;height:234px;background:#000;"></div>
<div style="left:26px;top:230px;width:565px;height:1px;background:#000;"></div>
<div style="left:26px;top:250px;width:565px;height:1px;background:#000;"></div>
<div style="left:26px;top:270px;width:565px;height:1px;background:#000;"></div>
<div style="left:26px;top:290px;width:565px;height:1px;background:#000;"></div>
<div style="left:26px;top:310px;width:565px;height:1px;background:#000;"></div>
<div style="left:26px;top:330px;width:565px;height:1px;background:#000;"></div>
<div style="left:26px;top:350px;width:565px;height:1px;background:#000;"></div>
<div style="left:26px;top:370px;width:565px;height:1px;background:#000;"></div>
<div style="left:26px;top:390px;width:565px;height:1px;background:#000;"></div>
<div style="left:26px;top:410px;width:565px;height:1px;background:#000;"></div>
<div style="left:26px;top:430px;width:565px;height:1px;background:#000;"></div>
<div style="left:750px;top:197px;width:1px;height:93px;background:#000;"></div>
<div style="left:828px;top:197px;width:1px;height:93px;background:#000;"></div>
<div style="left:674px;top:230px;width:240px;height:1px;background:#000;"></div>
<div style="left:674px;top:250px;width:240px;height:1px;background:#000;"></div>
<div style="left:674px;top:270px;width:240px;height:1px;background:#000;"></div>
<span class="t" style="left:29.16px;top:206.00px;font-size:14px;line-height:14px;color:#000;font-weight:700;transform:scaleX(0.8854);transform-origin:0 0;">STT</span>
<span class="t" style="left:79.80px;top:206.00px;font-size:14px;line-height:14px;color:#000;font-weight:700;transform:scaleX(0.9070);transform-origin:0 0;">MÃ</span>
<span class="t" style="left:143.74px;top:206.00px;font-size:14px;line-height:14px;color:#000;font-weight:700;transform:scaleX(0.9229);transform-origin:0 0;">SẢN PHẨM</span>
<span class="t" style="left:234.85px;top:208.00px;font-size:12.9px;line-height:12.9px;color:#000;font-weight:700;letter-spacing:0.056px;">LOẠI HÀNG</span>
<span class="t" style="left:321.50px;top:208.00px;font-size:12.9px;line-height:12.9px;color:#000;font-weight:700;letter-spacing:0.107px;">SỐ LƯỢNG</span>
<span class="t" style="left:419.25px;top:208.00px;font-size:12.9px;line-height:12.9px;color:#000;font-weight:700;letter-spacing:-0.094px;">TIỀN HÀNG</span>
<span class="t" style="left:511.55px;top:208.00px;font-size:12.9px;line-height:12.9px;color:#000;font-weight:700;letter-spacing:-0.262px;">THUẾ SUẤT</span>
<span class="t" style="left:674.85px;top:208.00px;font-size:12.9px;line-height:12.9px;color:#000;font-weight:700;letter-spacing:0.056px;">LOẠI HÀNG</span>
<span class="t" style="left:835.75px;top:208.00px;font-size:12.9px;line-height:12.9px;color:#000;font-weight:700;letter-spacing:-0.250px;">THUẾ SUẤT</span>
<span class="t" style="left:37.70px;top:233.00px;font-size:14px;line-height:14px;color:#000;transform:scaleX(0.8990);transform-origin:0 0;">1</span>
<span class="t" style="left:58.98px;top:233.00px;font-size:14px;line-height:14px;color:#000;transform:scaleX(0.8950);transform-origin:0 0;">VT10001</span>
<span class="t" style="left:126.30px;top:233.00px;font-size:14px;line-height:14px;color:#000;transform:scaleX(0.9153);transform-origin:0 0;">Đá hộc</span>
<span class="t" style="left:263.70px;top:233.00px;font-size:14px;line-height:14px;color:#000;transform:scaleX(0.8672);transform-origin:0 0;">Đá</span>
<span class="t" style="left:352.22px;top:233.00px;font-size:14px;line-height:14px;color:#000;transform:scaleX(0.8946);transform-origin:0 0;">1.054,06</span>
<span class="t" style="left:430.75px;top:233.00px;font-size:14px;line-height:14px;color:#000;transform:scaleX(0.9120);transform-origin:0 0;">124.570.727</span>
<span class="t" style="left:37.82px;top:253.00px;font-size:14px;line-height:14px;color:#000;transform:scaleX(0.8990);transform-origin:0 0;">2</span>
<span class="t" style="left:58.98px;top:253.00px;font-size:14px;line-height:14px;color:#000;transform:scaleX(0.8950);transform-origin:0 0;">VT10002</span>
<span class="t" style="left:126.30px;top:253.00px;font-size:14px;line-height:14px;color:#000;transform:scaleX(0.9153);transform-origin:0 0;">Đá 0x4</span>
<span class="t" style="left:252.49px;top:253.00px;font-size:14px;line-height:14px;color:#000;transform:scaleX(0.9107);transform-origin:0 0;">Bột đá</span>
<span class="t" style="left:345.20px;top:253.00px;font-size:14px;line-height:14px;color:#000;transform:scaleX(0.8923);transform-origin:0 0;">88.220,06</span>
<span class="t" style="left:419.91px;top:253.00px;font-size:14px;line-height:14px;color:#000;transform:scaleX(0.9159);transform-origin:0 0;">9.154.583.427</span>
<span class="t" style="left:569.90px;top:256.00px;font-size:12.6px;line-height:12.6px;color:#000;letter-spacing:0.350px;">0%</span>
<span class="t" style="left:37.82px;top:273.00px;font-size:14px;line-height:14px;color:#000;transform:scaleX(0.8990);transform-origin:0 0;">3</span>
<span class="t" style="left:58.98px;top:273.00px;font-size:14px;line-height:14px;color:#000;transform:scaleX(0.8950);transform-origin:0 0;">VT10005</span>
<span class="t" style="left:126.30px;top:273.00px;font-size:14px;line-height:14px;color:#000;transform:scaleX(0.9153);transform-origin:0 0;">Đá 4x6</span>
<span class="t" style="left:263.70px;top:273.00px;font-size:14px;line-height:14px;color:#000;transform:scaleX(0.8672);transform-origin:0 0;">Đá</span>
<span class="t" style="left:345.42px;top:273.00px;font-size:14px;line-height:14px;color:#000;transform:scaleX(0.8923);transform-origin:0 0;">67.254,62</span>
<span class="t" style="left:413.86px;top:273.00px;font-size:14px;line-height:14px;color:#000;transform:scaleX(0.9145);transform-origin:0 0;">10.108.538.112</span>
<span class="t" style="left:569.90px;top:276.00px;font-size:12.6px;line-height:12.6px;color:#000;letter-spacing:0.350px;">0%</span>
<span class="t" style="left:37.82px;top:293.00px;font-size:14px;line-height:14px;color:#000;transform:scaleX(0.8990);transform-origin:0 0;">4</span>
<span class="t" style="left:58.98px;top:293.00px;font-size:14px;line-height:14px;color:#000;transform:scaleX(0.8950);transform-origin:0 0;">VT10006</span>
<span class="t" style="left:126.30px;top:293.00px;font-size:14px;line-height:14px;color:#000;transform:scaleX(0.9349);transform-origin:0 0;">Đá 5x20 ly tâm</span>
<span class="t" style="left:263.70px;top:293.00px;font-size:14px;line-height:14px;color:#000;transform:scaleX(0.8672);transform-origin:0 0;">Đá</span>
<span class="t" style="left:362.78px;top:293.00px;font-size:14px;line-height:14px;color:#000;transform:scaleX(0.8880);transform-origin:0 0;">142,97</span>
<span class="t" style="left:437.72px;top:293.00px;font-size:14px;line-height:14px;color:#000;transform:scaleX(0.9134);transform-origin:0 0;">32.493.181</span>
<span class="t" style="left:569.90px;top:296.00px;font-size:12.6px;line-height:12.6px;color:#000;letter-spacing:0.350px;">0%</span>
<span class="t" style="left:37.70px;top:313.00px;font-size:14px;line-height:14px;color:#000;transform:scaleX(0.8990);transform-origin:0 0;">5</span>
<span class="t" style="left:58.98px;top:313.00px;font-size:14px;line-height:14px;color:#000;transform:scaleX(0.8950);transform-origin:0 0;">VT10007</span>
<span class="t" style="left:126.30px;top:313.00px;font-size:14px;line-height:14px;color:#000;transform:scaleX(0.9441);transform-origin:0 0;">Đá mi bụi</span>
<span class="t" style="left:252.49px;top:313.00px;font-size:14px;line-height:14px;color:#000;transform:scaleX(0.9107);transform-origin:0 0;">Bột đá</span>
<span class="t" style="left:345.20px;top:313.00px;font-size:14px;line-height:14px;color:#000;transform:scaleX(0.8923);transform-origin:0 0;">49.951,39</span>
<span class="t" style="left:419.46px;top:313.00px;font-size:14px;line-height:14px;color:#000;transform:scaleX(0.9159);transform-origin:0 0;">5.036.227.924</span>
<span class="t" style="left:569.90px;top:316.00px;font-size:12.6px;line-height:12.6px;color:#000;letter-spacing:0.350px;">0%</span>
<span class="t" style="left:37.70px;top:333.00px;font-size:14px;line-height:14px;color:#000;transform:scaleX(0.8990);transform-origin:0 0;">6</span>
<span class="t" style="left:58.98px;top:333.00px;font-size:14px;line-height:14px;color:#000;transform:scaleX(0.8950);transform-origin:0 0;">VT10008</span>
<span class="t" style="left:126.30px;top:333.00px;font-size:14px;line-height:14px;color:#000;transform:scaleX(0.9318);transform-origin:0 0;">Đá mi sàng</span>
<span class="t" style="left:252.49px;top:333.00px;font-size:14px;line-height:14px;color:#000;transform:scaleX(0.9107);transform-origin:0 0;">Bột đá</span>
<span class="t" style="left:351.99px;top:333.00px;font-size:14px;line-height:14px;color:#000;transform:scaleX(0.8946);transform-origin:0 0;">5.806,60</span>
<span class="t" style="left:430.52px;top:333.00px;font-size:14px;line-height:14px;color:#000;transform:scaleX(0.9120);transform-origin:0 0;">824.366.694</span>
<span class="t" style="left:569.90px;top:336.00px;font-size:12.6px;line-height:12.6px;color:#000;letter-spacing:0.350px;">0%</span>
<span class="t" style="left:37.82px;top:353.00px;font-size:14px;line-height:14px;color:#000;transform:scaleX(0.8990);transform-origin:0 0;">7</span>
<span class="t" style="left:58.98px;top:353.00px;font-size:14px;line-height:14px;color:#000;transform:scaleX(0.8950);transform-origin:0 0;">VT10015</span>
<span class="t" style="left:126.30px;top:353.00px;font-size:14px;line-height:14px;color:#000;transform:scaleX(0.9207);transform-origin:0 0;">Đá vệ sinh</span>
<span class="t" style="left:263.70px;top:353.00px;font-size:14px;line-height:14px;color:#000;transform:scaleX(0.8672);transform-origin:0 0;">Đá</span>
<span class="t" style="left:351.99px;top:353.00px;font-size:14px;line-height:14px;color:#000;transform:scaleX(0.8946);transform-origin:0 0;">1.360,60</span>
<span class="t" style="left:437.72px;top:353.00px;font-size:14px;line-height:14px;color:#000;transform:scaleX(0.9134);transform-origin:0 0;">86.583.639</span>
<span class="t" style="left:569.90px;top:356.00px;font-size:12.6px;line-height:12.6px;color:#000;letter-spacing:0.350px;">0%</span>
<span class="t" style="left:37.82px;top:373.00px;font-size:14px;line-height:14px;color:#000;transform:scaleX(0.8990);transform-origin:0 0;">8</span>
<span class="t" style="left:58.98px;top:373.00px;font-size:14px;line-height:14px;color:#000;transform:scaleX(0.8950);transform-origin:0 0;">VT10373</span>
<span class="t" style="left:126.30px;top:373.00px;font-size:14px;line-height:14px;color:#000;transform:scaleX(0.9153);transform-origin:0 0;">Đá 2x4</span>
<span class="t" style="left:263.70px;top:373.00px;font-size:14px;line-height:14px;color:#000;transform:scaleX(0.8672);transform-origin:0 0;">Đá</span>
<span class="t" style="left:369.80px;top:373.00px;font-size:14px;line-height:14px;color:#000;transform:scaleX(0.8906);transform-origin:0 0;">41,72</span>
<span class="t" style="left:444.92px;top:373.00px;font-size:14px;line-height:14px;color:#000;transform:scaleX(0.9152);transform-origin:0 0;">7.206.182</span>
<span class="t" style="left:569.90px;top:376.00px;font-size:12.6px;line-height:12.6px;color:#000;letter-spacing:0.350px;">0%</span>
<span class="t" style="left:37.70px;top:393.00px;font-size:14px;line-height:14px;color:#000;transform:scaleX(0.8990);transform-origin:0 0;">9</span>
<span class="t" style="left:58.98px;top:393.00px;font-size:14px;line-height:14px;color:#000;transform:scaleX(0.8950);transform-origin:0 0;">VT10376</span>
<span class="t" style="left:126.30px;top:393.00px;font-size:14px;line-height:14px;color:#000;transform:scaleX(0.9316);transform-origin:0 0;">Đất san lấp</span>
<span class="t" style="left:261.82px;top:393.00px;font-size:14px;line-height:14px;color:#000;transform:scaleX(0.8905);transform-origin:0 0;">Đất</span>
<span class="t" style="left:345.20px;top:393.00px;font-size:14px;line-height:14px;color:#000;transform:scaleX(0.8923);transform-origin:0 0;">21.069,80</span>
<span class="t" style="left:430.75px;top:393.00px;font-size:14px;line-height:14px;color:#000;transform:scaleX(0.9120);transform-origin:0 0;">599.214.839</span>
<span class="t" style="left:569.90px;top:396.00px;font-size:12.6px;line-height:12.6px;color:#000;letter-spacing:0.350px;">0%</span>
<span class="t" style="left:34.11px;top:413.00px;font-size:14px;line-height:14px;color:#000;transform:scaleX(0.8990);transform-origin:0 0;">10</span>
<span class="t" style="left:58.98px;top:413.00px;font-size:14px;line-height:14px;color:#000;transform:scaleX(0.8950);transform-origin:0 0;">VT10377</span>
<span class="t" style="left:126.30px;top:413.00px;font-size:14px;line-height:14px;color:#000;transform:scaleX(0.9149);transform-origin:0 0;">Đá 0x25</span>
<span class="t" style="left:252.49px;top:413.00px;font-size:14px;line-height:14px;color:#000;transform:scaleX(0.9107);transform-origin:0 0;">Bột đá</span>
<span class="t" style="left:370.47px;top:413.00px;font-size:14px;line-height:14px;color:#000;transform:scaleX(0.8906);transform-origin:0 0;">11,10</span>
<span class="t" style="left:444.92px;top:413.00px;font-size:14px;line-height:14px;color:#000;transform:scaleX(0.9152);transform-origin:0 0;">1.412.727</span>
<span class="t" style="left:569.90px;top:416.00px;font-size:12.6px;line-height:12.6px;color:#000;letter-spacing:0.350px;">0%</span>
<span class="t" style="left:701.00px;top:256.00px;font-size:12.6px;line-height:12.6px;color:#000;letter-spacing:0.750px;">Đất</span>
<span class="t" style="left:704.30px;top:276.00px;font-size:12.6px;line-height:12.6px;color:#000;letter-spacing:-1.050px;">Đá</span>
<span class="t" style="left:858.62px;top:236.00px;font-size:12.6px;line-height:12.6px;color:#000;">10%</span>
<span class="t" style="left:862.38px;top:256.00px;font-size:12.6px;line-height:12.6px;color:#000;">0%</span>
<span class="t" style="left:862.38px;top:276.00px;font-size:12.6px;line-height:12.6px;color:#000;">5%</span>
<div style="left:232px;top:231px;width:79px;height:19px;background:#e9eef9;"></div>
<span class="t" style="left:263.45px;top:233.00px;font-size:14px;line-height:14px;color:#000;transform:scaleX(0.8940);transform-origin:0 0;">Đá</span>
<div style="left:231px;top:230px;width:82px;height:2px;background:#3568c9;"></div>
<div style="left:231px;top:250px;width:82px;height:2px;background:#3568c9;"></div>
<div style="left:231px;top:230px;width:2px;height:22px;background:#3568c9;"></div>
<div style="left:311px;top:230px;width:2px;height:22px;background:#3568c9;"></div>
<div style="left:228px;top:227px;width:7px;height:7px;background:#fff;"></div>
<div style="left:229px;top:228px;width:5px;height:5px;background:#3568c9;"></div>
<div style="left:228px;top:247px;width:7px;height:7px;background:#fff;"></div>
<div style="left:229px;top:248px;width:5px;height:5px;background:#3568c9;"></div>
<div style="left:308px;top:227px;width:7px;height:7px;background:#fff;"></div>
<div style="left:309px;top:228px;width:5px;height:5px;background:#3568c9;"></div>
<div style="left:308px;top:247px;width:7px;height:7px;background:#fff;"></div>
<div style="left:309px;top:248px;width:5px;height:5px;background:#3568c9;"></div>
<div style="left:672px;top:197px;width:2px;height:94px;background:#c2334d;"></div>
<div style="left:914px;top:197px;width:2px;height:94px;background:#c2334d;"></div>
<div style="left:672px;top:290px;width:244px;height:2px;background:#c2334d;"></div>
<div style="left:670px;top:197px;width:5px;height:2px;background:#c2334d;"></div>
<div style="left:669px;top:287px;width:7px;height:7px;background:#fff;"></div>
<div style="left:670px;top:288px;width:5px;height:5px;background:#c2334d;"></div>
<div style="left:912px;top:197px;width:5px;height:2px;background:#c2334d;"></div>
<div style="left:911px;top:287px;width:7px;height:7px;background:#fff;"></div>
<div style="left:912px;top:288px;width:5px;height:5px;background:#c2334d;"></div>
<div style="left:505px;top:231px;width:245px;height:19px;background:#fff;"></div>
<div style="left:504px;top:230px;width:87px;height:2px;background:#217346;"></div>
<div style="left:504px;top:250px;width:87px;height:2px;background:#217346;"></div>
<div style="left:503px;top:230px;width:2px;height:22px;background:#217346;"></div>
<div style="left:590px;top:231px;width:1px;height:19px;background:#fff;"></div>
<div style="left:588px;top:249px;width:5px;height:5px;background:#fff;"></div>
<div style="left:589px;top:250px;width:4px;height:3px;background:#217346;"></div>
<span class="t" style="left:507.20px;top:236.00px;font-size:12.4px;line-height:12.4px;color:#000;letter-spacing:-0.125px;">=VLOOKUP(</span>
<span class="t" style="left:579.30px;top:235.00px;font-size:13px;line-height:13px;color:#4472c4;letter-spacing:0.100px;">D2</span>
<span class="t" style="left:595.55px;top:236.00px;font-size:12.4px;line-height:12.4px;color:#000;">;</span>
<span class="t" style="left:599.95px;top:236.00px;font-size:12.4px;line-height:12.4px;color:#c2334d;letter-spacing:0.100px;">$I$1:$K$4</span>
<span class="t" style="left:657.25px;top:236.00px;font-size:12.4px;line-height:12.4px;color:#000;letter-spacing:-0.162px;">;2;FALSE)</span>
<div style="left:713px;top:231px;width:1px;height:20px;background:#000;"></div>
</body></html>
